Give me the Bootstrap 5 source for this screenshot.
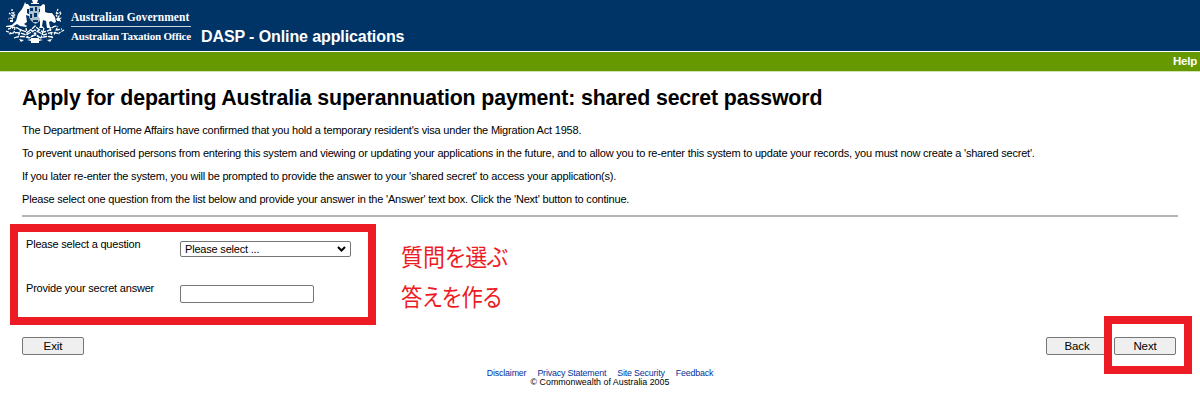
<!DOCTYPE html>
<html lang="en">

<head>
    <meta charset="UTF-8">
    <meta name="viewport" content="width=device-width, initial-scale=1">
    <title>DASP - Online applications</title>
    <!-- Bootstrap CSS -->
    <link href="https://cdn.jsdelivr.net/npm/bootstrap@5.3.0/dist/css/bootstrap.min.css" rel="stylesheet">
    <style>
        body {
            font-family: "Liberation Sans", Arial, sans-serif;
            font-size: 11px;
            line-height: 13px;
            letter-spacing: -.201px;
            color: #000;
            background-color: #fff;
            height: 401px;
            overflow: hidden;
        }

        .site-header {
            height: 51px;
            background-color: #036;
        }

        .crest {
            width: 68px;
            height: 46px;
            flex: none;
        }

        .agency {
            width: 120px;
            margin: 9px 0 0 3px;
            font: bold 11.5px/16px "Liberation Serif", "Times New Roman", serif;
            letter-spacing: .05px;
            white-space: nowrap;
        }

        .agency-top {
            height: 18px;
            border-bottom: 1px solid #c9d3dd;
        }

        .agency-bottom {
            padding-top: 1px;
            font-size: 11px;
            letter-spacing: -.21px;
        }

        .app-name {
            margin: 27px 0 0 10px;
            font-size: 16px;
            line-height: 20px;
            letter-spacing: -.1px;
        }

        .help-bar {
            height: 20px;
            padding-right: 3px;
            margin-top: 1px;
            font-size: 11.5px;
            line-height: 19px;
            background-color: #690;
            border-bottom: 1px solid #d3e3b2;
        }

        .page-body {
            padding: 13px 22px 0;
        }

        .page-body h1 {
            margin-bottom: 13px;
            font-size: 21.33px;
            line-height: 26px;
            letter-spacing: -.125px;
        }

        .page-body p {
            margin-bottom: 10px;
            white-space: nowrap;
        }

        .page-body hr {
            height: 2px;
            margin: -1px 0 0;
            border: 0;
            background-color: #b4b4b4;
            opacity: 1;
        }

        .question-area {
            height: 120px;
            padding: 21px 0 0 4px;
        }

        .question-row {
            height: 44px;
        }

        .question-row label {
            width: 154px;
        }

        .question-row .form-select,
        .question-row .form-control {
            margin-top: 3px;
            padding: 0 4px;
            font-size: 11px;
            line-height: 14px;
            letter-spacing: -.195px;
            color: #000;
            border: 1px solid #767676;
            border-radius: 2px;
        }

        .question-row .form-select {
            width: 171px;
            height: 16px;
            min-height: 0;
            background-image: url("data:image/svg+xml,%3csvg xmlns='http://www.w3.org/2000/svg' viewBox='0 0 9 6'%3e%3cpath fill='none' stroke='%23000' stroke-width='2' d='M1 1l3.5 3.5L8 1'/%3e%3c/svg%3e");
            background-position: right 4px center;
            background-size: 9px 6px;
        }

        .question-row .form-control {
            width: 134px;
            height: 18px;
            min-height: 0;
        }

        .btn-plain {
            width: 62px;
            height: 18px;
            padding: 0;
            font-size: 11.5px;
            line-height: 16px;
            letter-spacing: -.1px;
            color: #000;
            background-color: #efefef;
            border: 1px solid #767676;
            border-radius: 2px;
        }

        .button-row {
            gap: 6px;
            padding-right: 2px;
        }

        .site-footer {
            margin-top: 14px;
            font-size: 8.85px;
            line-height: 9px;
            letter-spacing: 0;
        }

        .footer-links {
            gap: 11px;
            letter-spacing: -.17px;
        }

        .site-footer a {
            color: #039;
            text-decoration: none;
        }

        /* Red guide marks laid over the form */
        .guide-box {
            position: absolute;
            border: 8px solid #ed1c24;
        }

        .guide-form {
            left: 10px;
            top: 224px;
            width: 366px;
            height: 101px;
        }

        .guide-next {
            left: 1104px;
            top: 316px;
            width: 88px;
            height: 58px;
        }

        .guide-note {
            position: absolute;
            left: 401px;
            font: 400 24px/40px "Noto Sans CJK JP", sans-serif;
            font-feature-settings: "palt";
            letter-spacing: 0;
            color: #ed1c24;
            white-space: nowrap;
            transform: scaleX(.915);
            transform-origin: left;
        }

        .note-question {
            top: 236px;
        }

        .note-answer {
            top: 276px;
            transform: scaleX(.89);
        }
    </style>
</head>

<body class="position-relative">
    <header class="site-header d-flex text-white">
        <svg class="crest" viewBox="0 0 68 46" fill="#fff" aria-hidden="true">
            <!-- Star -->
            <path d="M32 0h6l-1 3h2v1h-8V3h2z" />
            <!-- Shield -->
            <path d="M29 6h13v11q-1 4-6.500 7Q30 21 29 17z" fill="#aebfce" />
            <path d="M30 8h3v3h-3zM35 7h2v4h-2zM39 9h2v3h-2zM30 14h2v4h-2zM34 13h3v4h-3zM39 15h2v3h-2zM33 20h5v2h-5z" fill="#036" />
            <!-- Kangaroo -->
            <path d="M25 2l1 2 2 0 2 3-1 2-2 0 0 4 3 2-1 1-3-1 1 7-3 2 3 2-1 1-6-1-3-2-5 3-6 0v-1l6-1 4-4 2-7 4-5 2-4z" />
            <!-- Emu -->
            <path d="M41 6l2-2 2 1v7l3 1 4 0 3 4 1 5-2 1-3-2-2 1 1 5 3 1h-6l-1-7-3-1-1 6 2 2h-5l1-2v-7l-2-3 2-4v-5z" />
            <!-- Wattle branches -->
            <g fill="none" stroke="#fff" stroke-width="1.300">
                <path d="M12 9v4l4 3M9 13l5 4-6 2M14 12l-2 8M58 9l-2 5 5-2M61 13l-4 6 5-1M56 15l5 7" stroke-dasharray="2 1" />
                <path d="M10 27q6 0 9 2t9 3q5-4 7-6 3 3 8 6 6-1 9-4t6-1M9 34q9-3 17 1l9-5 9 5q8-4 16-1M14 38q8-3 15 0l6-3 6 3q7-3 13 0" stroke-dasharray="5 1" />
                <path d="M6 31l5 2M15 27l-1 6M21 29l-3 8M26 28l2 10M44 28l-3 10M50 28l2 9M57 28l-3 7M64 30l-5 3M31 30l8 7M39 30l-8 7M8 29l5-1M57 30l5-1" stroke-dasharray="3 1" />
            </g>
            <path d="M31 38h8v5h-8zM27 40l4-1v2zM39 39l4 1-4 1zM19 39l5 1-3 2zM47 40l5-1-2 3zM10 20h3v2h-3zM57 19h3v2h-3z" />
        </svg>
        <div class="agency">
            <div class="agency-top">Australian Government</div>
            <div class="agency-bottom">Australian Taxation Office</div>
        </div>
        <div class="app-name fw-bold">DASP - Online applications</div>
    </header>
    <nav class="help-bar text-end text-white fw-bold">Help</nav>

    <!-- Main Content -->
    <main class="page-body">
        <h1 class="fw-bold">Apply for departing Australia superannuation payment: shared secret password</h1>
        <p>The Department of Home Affairs have confirmed that you hold a temporary resident's visa under the Migration Act 1958.</p>
        <p>To prevent unauthorised persons from entering this system and viewing or updating your applications in the future, and to allow you to re-enter this system to update your records, you must now create a 'shared secret'.</p>
        <p>If you later re-enter the system, you will be prompted to provide the answer to your 'shared secret' to access your application(s).</p>
        <p>Please select one question from the list below and provide your answer in the 'Answer' text box. Click the 'Next' button to continue.</p>
        <hr>
        <form class="question-area">
            <div class="question-row d-flex align-items-start">
                <label for="question">Please select a question</label>
                <select id="question" class="form-select">
                    <option>Please select ...</option>
                </select>
            </div>
            <div class="question-row d-flex align-items-start">
                <label for="answer">Provide your secret answer</label>
                <input id="answer" type="text" class="form-control">
            </div>
        </form>
        <div class="button-row d-flex">
            <button type="button" class="btn btn-plain">Exit</button>
            <button type="button" class="btn btn-plain ms-auto">Back</button>
            <button type="button" class="btn btn-plain">Next</button>
        </div>
    </main>

    <footer class="site-footer text-center">
        <div class="footer-links d-flex justify-content-center">
            <a href="#">Disclaimer</a>
            <a href="#">Privacy Statement</a>
            <a href="#">Site Security</a>
            <a href="#">Feedback</a>
        </div>
        <div>&copy; Commonwealth of Australia 2005</div>
    </footer>

    <div class="guide-box guide-form"></div>
    <div class="guide-box guide-next"></div>
    <div class="guide-note note-question" lang="ja">質問を選ぶ</div>
    <div class="guide-note note-answer" lang="ja">答えを作る</div>

    <script src="https://cdn.jsdelivr.net/npm/bootstrap@5.3.0/dist/js/bootstrap.bundle.min.js"></script>
</body>

</html>
